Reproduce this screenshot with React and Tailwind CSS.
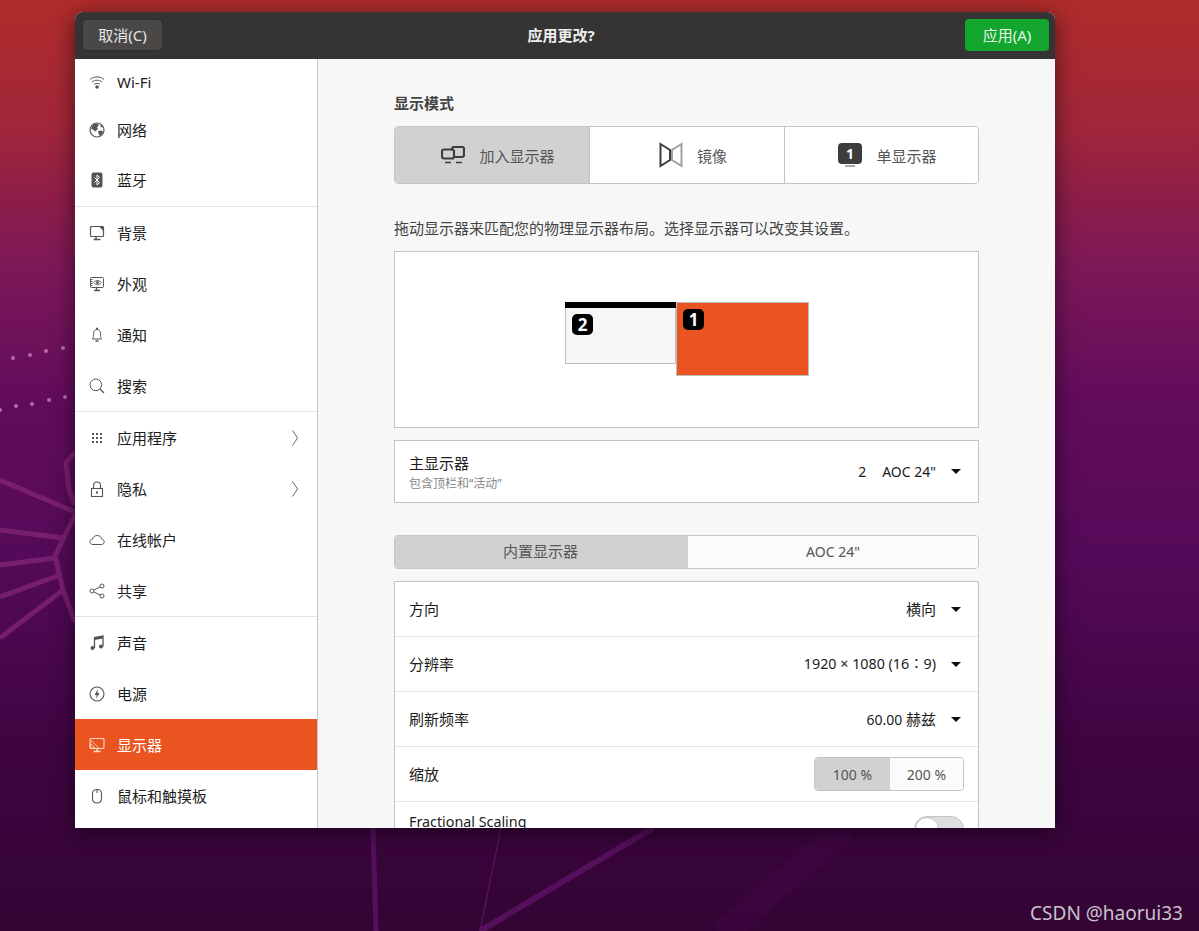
const fontStack = { fontFamily: '"Noto Sans", "Noto Sans CJK SC", sans-serif' };

function Icon({ children, className = '' }) {
  return (
    <svg viewBox="0 0 16 16" width="16" height="16" fill="none" stroke="currentColor" strokeWidth="1" className={`shrink-0 ${className}`}>
      {children}
    </svg>
  );
}

const icons = {
  wifi: (
    <>
      <path d="M1 5.5C5 2 11 2 15 5.5M3 8C6 5.6 10 5.6 13 8M5 10.3C6.8 9 9.2 9 11 10.3" />
      <circle cx="8" cy="13" r="1.8" fill="currentColor" stroke="none" />
    </>
  ),
  globe: (
    <>
      <circle cx="8" cy="8" r="7" strokeWidth="1.2" />
      <path d="M4 2.5L8 1.5L10 3L8 5.5L9 7L6 9.5L4 7.5L2 7ZM9 9L13 8.5L14 10L11.5 14L10 13ZM11 2L14 5L12 5.5Z" fill="currentColor" stroke="none" />
    </>
  ),
  bluetooth: (
    <>
      <rect x="2.5" y="0.5" width="11" height="15" rx="2" fill="currentColor" stroke="none" />
      <path d="M5.5 5.5L10.5 10.5L8 13V3L10.5 5.5L5.5 10.5" stroke="#fff" />
    </>
  ),
  background: (
    <>
      <path d="M2.5 1.5H13.5A1 1 0 0 1 14.5 2.5V10.5A1 1 0 0 1 13.5 11.5H2.5A1 1 0 0 1 1.5 10.5V2.5A1 1 0 0 1 2.5 1.5Z" strokeWidth="1.2" />
      <path d="M10 1.5H14.5V6Z" fill="currentColor" stroke="none" />
      <path d="M7 12V14M4.5 14.5H11.5" strokeWidth="1.4" />
    </>
  ),
  appearance: (
    <>
      <rect x="1.5" y="1.5" width="13" height="10" rx="1" />
      <path d="M1.5 3.5H3.5M1.5 5.5H3.5M1.5 7.5H3.5M1.5 9.5H3.5" />
      <path d="M4.5 6.5C6.5 3.8 10.5 3.8 12.5 6.5C10.5 9.2 6.5 9.2 4.5 6.5Z" />
      <circle cx="8.5" cy="6.5" r="1.4" fill="currentColor" stroke="none" />
      <path d="M7.5 12V14M5 14.5H11" strokeWidth="1.4" />
    </>
  ),
  bell: (
    <>
      <path d="M3.5 12V11.5C4.5 10.5 4.5 9 4.5 6.5C4.5 4 6 2.5 8 2.5C10 2.5 11.5 4 11.5 6.5C11.5 9 11.5 10.5 12.5 11.5V12Z" />
      <path d="M7 1.5H9M6.5 14H9.5" strokeWidth="1.4" />
    </>
  ),
  search: (
    <>
      <circle cx="6.8" cy="6.8" r="5.8" />
      <path d="M11 11L15 15" strokeWidth="1.2" />
    </>
  ),
  grid: (
    <g fill="currentColor" stroke="none">
      <rect x="3" y="3" width="2" height="2" />
      <rect x="7" y="3" width="2" height="2" />
      <rect x="11" y="3" width="2" height="2" />
      <rect x="3" y="7" width="2" height="2" />
      <rect x="7" y="7" width="2" height="2" />
      <rect x="11" y="7" width="2" height="2" />
      <rect x="3" y="11" width="2" height="2" />
      <rect x="7" y="11" width="2" height="2" />
      <rect x="11" y="11" width="2" height="2" />
    </g>
  ),
  lock: (
    <>
      <rect x="2.5" y="7.5" width="11" height="8" strokeWidth="1.1" />
      <path d="M4.5 7.5V4.5C4.5 2.4 6 1 8 1C10 1 11.5 2.4 11.5 4.5V7.5" strokeWidth="1.1" />
      <rect x="7" y="10.5" width="2" height="2" fill="currentColor" stroke="none" />
    </>
  ),
  cloud: (
    <path d="M4 12.5C2 12.5 0.8 11.2 0.8 9.8C0.8 8.3 2 7.2 3.5 7.2C4 4.8 6 3.5 8.2 3.5C10.6 3.5 12.4 5 12.8 7.2C14.2 7.4 15.2 8.5 15.2 9.9C15.2 11.4 14 12.5 12.5 12.5Z" />
  ),
  share: (
    <>
      <circle cx="3" cy="8" r="2" />
      <circle cx="13" cy="3" r="2" />
      <circle cx="13" cy="13" r="2" />
      <path d="M4.8 7.1L11.2 3.9M4.8 8.9L11.2 12.1" />
    </>
  ),
  music: (
    <>
      <path d="M5.5 13V2.5L14 1V11.5" strokeWidth="1.3" />
      <path d="M5.5 2.5L14 1V3.5L5.5 5Z" fill="currentColor" stroke="none" />
      <circle cx="3.5" cy="13" r="2" fill="currentColor" stroke="none" />
      <circle cx="12" cy="11.5" r="2" fill="currentColor" stroke="none" />
    </>
  ),
  power: (
    <>
      <circle cx="8" cy="8" r="7" strokeWidth="1.1" />
      <path d="M9 3L5.5 9H7.7L7 13L10.5 7H8.3Z" fill="currentColor" stroke="none" />
    </>
  ),
  display: (
    <>
      <rect x="1" y="1.5" width="14" height="10" rx="1" strokeWidth="1.1" />
      <path d="M1.5 3L10 11M1.5 6.5L6 11H1.5Z" strokeWidth="0.9" />
      <path d="M8 12V14M4.5 14.5H11.5" strokeWidth="1.4" />
    </>
  ),
  mouse: (
    <>
      <path d="M8 1.5C5.5 1.5 3.5 2.5 3.5 5.5V10.5C3.5 13.2 5.5 15 8 15C10.5 15 12.5 13.2 12.5 10.5V5.5C12.5 2.5 10.5 1.5 8 1.5Z" strokeWidth="1.1" />
      <path d="M8 1.5V5" />
    </>
  ),
};

const navGroups = [
  [
    { icon: 'wifi', label: 'Wi-Fi', height: 'h-[47px] pb-[2px]' },
    { icon: 'globe', label: '网络', height: 'h-[50px] pb-[2px]' },
    { icon: 'bluetooth', label: '蓝牙', height: 'h-[50px] pb-[2px]' },
  ],
  [
    { icon: 'background', label: '背景' },
    { icon: 'appearance', label: '外观' },
    { icon: 'bell', label: '通知' },
    { icon: 'search', label: '搜索' },
  ],
  [
    { icon: 'grid', label: '应用程序', arrow: true },
    { icon: 'lock', label: '隐私', arrow: true },
    { icon: 'cloud', label: '在线帐户' },
    { icon: 'share', label: '共享' },
  ],
  [
    { icon: 'music', label: '声音' },
    { icon: 'power', label: '电源' },
    { icon: 'display', label: '显示器', active: true },
    { icon: 'mouse', label: '鼠标和触摸板' },
  ],
];

function NavRow({ item }) {
  return (
    <div
      className={`flex items-center gap-3 px-3.5 text-[15px] ${item.height || 'h-[51px]'} ${
        item.active ? 'bg-[#e95420] text-white' : 'text-[#1c1c1c]'
      }`}
    >
      <span className={item.active ? 'flex text-[#fbd9cc]' : 'flex text-[#555]'}>
        <Icon>{icons[item.icon]}</Icon>
      </span>
      <span className="mt-px flex-1">{item.label}</span>
      {item.arrow && (
        <svg viewBox="0 0 6 16" width="6" height="16" fill="none" stroke="#666" strokeWidth="1" className="mr-[5px]">
          <path d="M0.5 0.5L5.5 8L0.5 15.5" />
        </svg>
      )}
    </div>
  );
}

function Caret() {
  return <span className="mr-[3px] ml-[15px] h-0 w-0 border-x-[5px] border-t-[5px] border-x-transparent border-t-[#111]" />;
}

function ModeButton({ label, selected, children, className = '' }) {
  return (
    <div className={`flex items-center justify-center gap-3.5 pl-3 text-[15px] text-[#555] ${selected ? 'bg-[#d1d1d1]' : 'bg-white'} ${className}`}>
      {children}
      <span className="mt-[3px]">{label}</span>
    </div>
  );
}

function SettingRow({ label, value }) {
  return (
    <div className="flex h-[55px] items-center justify-between border-b border-[#e4e4e4] px-3.5 text-[15px] text-[#1c1c1c]">
      <span>{label}</span>
      <span className="flex items-center text-[14px]">
        {value}
        <Caret />
      </span>
    </div>
  );
}

function Wallpaper() {
  return (
    <svg viewBox="0 0 1199 931" width="1199" height="931" fill="none" className="absolute inset-0">
      <g stroke="#8c2a7c" strokeWidth="5" opacity="0.65">
        <path d="M0 480L75 512M0 530L63 538M0 565L55 558M0 597L60 575M0 638L63 590" />
        <path d="M75 515L55 556L63 590L75 622M75 452L66 463L69 490L75 505" />
      </g>
      <g fill="#b56aa8">
        <circle cx="13" cy="358" r="2" />
        <circle cx="30" cy="355" r="2" />
        <circle cx="46" cy="351" r="2" />
        <circle cx="63" cy="348" r="2" />
        <circle cx="0" cy="410" r="2" />
        <circle cx="16" cy="406" r="2" />
        <circle cx="32" cy="404" r="2" />
        <circle cx="49" cy="400" r="2" />
        <circle cx="65" cy="397" r="2" />
      </g>
      <path d="M373 828L376 931" stroke="#560f5c" strokeWidth="5" />
      <path d="M501 828L480 931" stroke="#560f5c" strokeWidth="1.5" />
      <path d="M653 828L480 931" stroke="#560f5c" strokeWidth="6" />
      <path d="M845 828L722 935" stroke="#47084c" strokeWidth="26" opacity="0.35" />
    </svg>
  );
}

export default function App() {
  return (
    <div
      className="relative h-[931px] w-[1199px] overflow-hidden bg-[linear-gradient(180deg,#b02c2a_0%,#a0263a_14%,#8e1e48_21%,#7c1858_29%,#620c5c_43%,#540a58_60%,#3f0542_80%,#330434_100%)]"
      style={fontStack}
    >
      <Wallpaper />

      {/* window */}
      <div className="absolute top-3 left-[75px] flex h-[816px] w-[980px] flex-col overflow-hidden rounded-t-[8px] bg-[#f7f7f7] shadow-[0_4px_22px_rgba(0,0,0,0.55)]">
        <header className="flex h-[47px] shrink-0 items-start justify-between bg-[#353333] px-[7px] pt-[7px]">
          <button className="h-8 w-[81px] rounded-[4px] border border-[#2f2d2d] bg-[#4a4846] text-[15px] text-[#e6e6e6]">取消(C)</button>
          <h1 className="pt-[5px] pr-1.5 text-[15px] font-bold text-[#eeeeee]">应用更改?</h1>
          <button className="mr-[-1px] h-8 w-[84px] rounded-[4px] bg-[#12a62e] text-[15px] text-[#e8f5e8]">应用(A)</button>
        </header>

        <div className="flex min-h-0 flex-1">
          <aside className="w-[243px] shrink-0 overflow-hidden border-r border-[#c6c6c6] bg-white">
            {navGroups.map((group, i) => (
              <div key={i} className={i < navGroups.length - 1 ? 'border-b border-[#e2e2e2]' : ''}>
                {group.map((item) => (
                  <NavRow key={item.label} item={item} />
                ))}
              </div>
            ))}
          </aside>

          <main className="min-w-0 flex-1 overflow-hidden pt-[34px] pl-[76px]">
            <div className="w-[585px]">
              <h2 className="h-5 text-[15px] leading-5 font-bold text-[#444]">显示模式</h2>

              <div className="mt-[13px] flex h-[58px] overflow-hidden rounded-[4px] border border-[#c4c4c4]">
                <ModeButton label="加入显示器" selected className="w-[195px] border-r border-[#c4c4c4]">
                  <svg viewBox="0 0 24 18" width="24" height="18" fill="none" stroke="#3d3d3d" strokeWidth="2.2">
                    <rect x="1" y="3.5" width="12" height="9" rx="2" />
                    <path d="M11 3.5V3A2 2 0 0 1 13 1H21A2 2 0 0 1 23 3V9A2 2 0 0 1 21 11H13" />
                    <path d="M4 16.5H10M15 16.5H21" strokeWidth="1.5" />
                  </svg>
                </ModeButton>
                <ModeButton label="镜像" className="w-[195px] border-r border-[#c4c4c4]">
                  <svg viewBox="0 0 24 26" width="24" height="26" fill="none" strokeWidth="2">
                    <path d="M1.5 2L11 8V18L1.5 24Z" stroke="#3d3d3d" />
                    <path d="M22.5 2L13 8V18L22.5 24Z" stroke="#a0a0a0" />
                  </svg>
                </ModeButton>
                <ModeButton label="单显示器" className="flex-1">
                  <svg viewBox="0 0 24 24" width="24" height="24" fill="none">
                    <rect x="0" y="0" width="24" height="21" rx="4" fill="#3d3d3d" />
                    <path d="M7 23H17" stroke="#8a8a8a" strokeWidth="1.5" />
                    <text x="12" y="15.5" textAnchor="middle" fontSize="14" fontWeight="700" fill="#fff">1</text>
                  </svg>
                </ModeButton>
              </div>

              <p className="mt-[34px] h-5 text-[15px] leading-5 text-[#444]">
                拖动显示器来匹配您的物理显示器布局。选择显示器可以改变其设置。
              </p>

              <div className="relative mt-[13px] h-[177px] border border-[#c4c4c4] bg-white">
                <div className="absolute top-[50px] left-[170px] h-[62px] w-[111px] border border-[#bdbdbd] bg-[#f6f6f6]">
                  <div className="-m-px h-1.5 bg-black" />
                  <span className="absolute top-[11px] left-[6px] flex size-[21px] items-center justify-center rounded-[5px] bg-black text-[17px] leading-none font-bold text-white">2</span>
                </div>
                <div className="absolute top-[50px] left-[281px] h-[74px] w-[133px] border border-[#bdbdbd] bg-[#e95420]">
                  <span className="absolute top-1.5 left-1.5 flex size-[21px] items-center justify-center rounded-[5px] bg-black text-[17px] leading-none font-bold text-white">1</span>
                </div>
              </div>

              <div className="mt-3 flex h-[63px] items-center justify-between border border-[#c4c4c4] bg-white px-3.5">
                <div>
                  <div className="pt-px text-[15px] leading-5 text-[#1c1c1c]">主显示器</div>
                  <div className="mt-[3px] text-[12px] leading-4 text-[#888]">包含顶栏和“活动”</div>
                </div>
                <span className="flex items-center text-[14px] text-[#1c1c1c]">
                  2<span className="ml-4">AOC 24"</span>
                  <Caret />
                </span>
              </div>

              <div className="mt-8 flex h-[34px] overflow-hidden rounded-[4px] border border-[#c4c4c4] text-[15px] text-[#555]">
                <div className="flex w-[293px] items-center justify-center bg-[#d1d1d1] pr-0.5 pb-0.5">内置显示器</div>
                <div className="flex flex-1 items-center justify-center bg-[#fbfbfb] pb-0.5 text-[14px]">AOC 24"</div>
              </div>

              <div className="mt-3 border border-[#c4c4c4] bg-white">
                <SettingRow label="方向" value={<span className="text-[15px]">横向</span>} />
                <SettingRow label="分辨率" value={<span className="text-[14.3px]">1920 × 1080 (16∶9)</span>} />
                <SettingRow
                  label="刷新频率"
                  value={
                    <>
                      60.00&nbsp;<span className="text-[15px]">赫兹</span>
                    </>
                  }
                />
                <div className="flex h-[55px] items-center justify-between border-b border-[#e4e4e4] px-3.5 text-[15px] text-[#1c1c1c]">
                  <span>缩放</span>
                  <div className="flex h-[34px] w-[150px] overflow-hidden rounded-[4px] border border-[#c4c4c4] text-[14px] text-[#555]">
                    <div className="flex w-[75px] items-center justify-center bg-[#d1d1d1]">100 %</div>
                    <div className="flex flex-1 items-center justify-center bg-[#fbfbfb]">200 %</div>
                  </div>
                </div>
                <div className="flex h-[55px] items-start justify-between px-3.5 pt-[10px] text-[14.3px] leading-5 text-[#1c1c1c]">
                  <span>Fractional Scaling</span>
                  <span className="mt-1 h-[26px] w-[50px] rounded-full border border-[#c4c4c4] bg-[#dedede]">
                    <span className="block size-6 rounded-full border border-[#c4c4c4] bg-white" />
                  </span>
                </div>
              </div>
            </div>
          </main>
        </div>
      </div>

      <div className="absolute right-4 bottom-1 text-[19px] text-[#c9c2cb]">CSDN @haorui33</div>
    </div>
  );
}
